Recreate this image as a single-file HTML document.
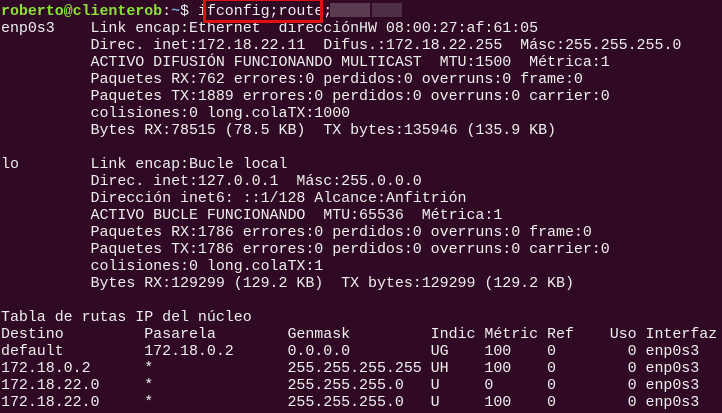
<!DOCTYPE html>
<html><head><meta charset="utf-8"><style>
html,body{margin:0;padding:0;width:722px;height:413px;overflow:hidden;background:#300a24;}
pre{margin:0;position:absolute;left:1px;top:3px;font-family:"Liberation Mono","DejaVu Sans Mono",monospace;font-size:15px;letter-spacing:-0.05px;line-height:17px;color:#eeeeec;white-space:pre;}
.g{color:#8ae234;font-weight:bold}.b{color:#729fcf;font-weight:bold}
.box{position:absolute;left:203px;top:-2px;width:114px;height:19px;border:3px solid #e01010;}
.blur{position:absolute;top:3px;height:14px;background:#5a3b50;}
</style></head><body>
<pre><span class="g">roberto@clienterob</span>:<span class="b">~</span>$ ifconfig;route;
enp0s3    Link encap:Ethernet  direcciónHW 08:00:27:af:61:05
          Direc. inet:172.18.22.11  Difus.:172.18.22.255  Másc:255.255.255.0
          ACTIVO DIFUSIÓN FUNCIONANDO MULTICAST  MTU:1500  Métrica:1
          Paquetes RX:762 errores:0 perdidos:0 overruns:0 frame:0
          Paquetes TX:1889 errores:0 perdidos:0 overruns:0 carrier:0
          colisiones:0 long.colaTX:1000
          Bytes RX:78515 (78.5 KB)  TX bytes:135946 (135.9 KB)

lo        Link encap:Bucle local
          Direc. inet:127.0.0.1  Másc:255.0.0.0
          Dirección inet6: ::1/128 Alcance:Anfitrión
          ACTIVO BUCLE FUNCIONANDO  MTU:65536  Métrica:1
          Paquetes RX:1786 errores:0 perdidos:0 overruns:0 frame:0
          Paquetes TX:1786 errores:0 perdidos:0 overruns:0 carrier:0
          colisiones:0 long.colaTX:1
          Bytes RX:129299 (129.2 KB)  TX bytes:129299 (129.2 KB)

Tabla de rutas IP del núcleo
Destino         Pasarela        Genmask         Indic Métric Ref    Uso Interfaz
default         172.18.0.2      0.0.0.0         UG    100    0        0 enp0s3
172.18.0.2      *               255.255.255.255 UH    100    0        0 enp0s3
172.18.22.0     *               255.255.255.0   U     0      0        0 enp0s3
172.18.22.0     *               255.255.255.0   U     100    0        0 enp0s3</pre>
<div class="box"></div>
<div class="blur" style="left:330px;width:40px;"></div>
<div class="blur" style="left:372px;width:30px;background:#4d2e44"></div>
</body></html>
